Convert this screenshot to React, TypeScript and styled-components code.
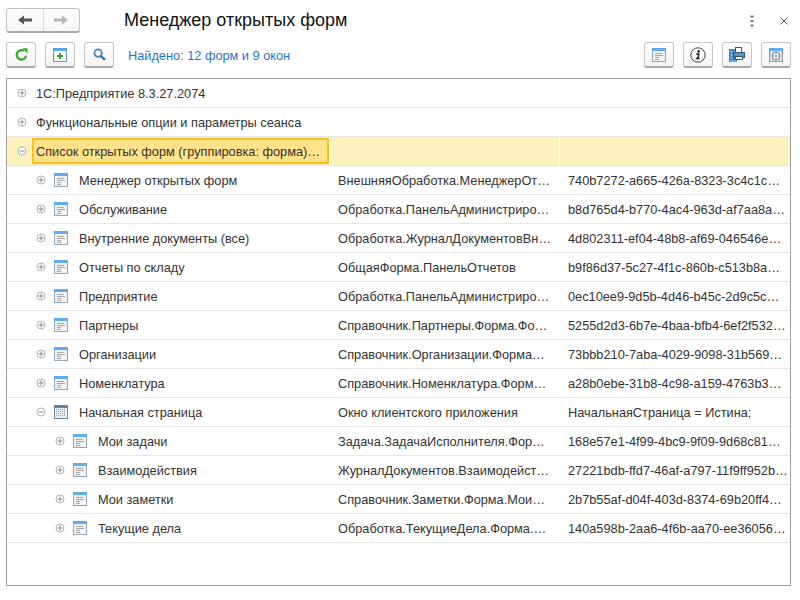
import React, { ReactElement, ReactNode } from 'react';
import styled, { createGlobalStyle } from 'styled-components';

const GlobalStyle = createGlobalStyle`
  html, body {
    margin: 0;
    padding: 0;
    background: #fff;
  }
  body {
    font-family: "Liberation Sans", Arial, sans-serif;
    font-size: 12.75px;
    color: #333;
  }
`;

const Page = styled.div`
  width: 800px;
  height: 600px;
  box-sizing: border-box;
  padding: 8px 8px 0 6px;
  display: flex;
  flex-direction: column;
`;

const Header = styled.div`
  display: flex;
  align-items: center;
  height: 25px;
`;

const NavGroup = styled.div`
  display: flex;
  width: 74px;
  height: 25px;
  box-sizing: border-box;
  border: 1px solid #c4c4c4;
  border-bottom: 2px solid #a8a8a8;
  border-radius: 3px;
  background: linear-gradient(#fff, #f5f5f5);
`;

const NavPart = styled.div<{ $divided?: boolean }>`
  flex: 1;
  display: flex;
  align-items: center;
  justify-content: center;
  border-left: ${(p) => (p.$divided ? '1px solid #d8d8d8' : 'none')};
`;

const Title = styled.div`
  margin-left: 44px;
  font-size: 18px;
  line-height: 25px;
  color: #111;
  flex: 1;
`;

const WindowActions = styled.div`
  display: flex;
  align-items: center;
  gap: 26px;
  padding-right: 4px;
`;

const Toolbar = styled.div`
  display: flex;
  align-items: center;
  height: 26px;
  margin-top: 9px;
  gap: 9px;
`;

const ToolButton = styled.div`
  width: 30px;
  height: 26px;
  box-sizing: border-box;
  display: flex;
  align-items: center;
  justify-content: center;
  border: 1px solid #c6c6c6;
  border-bottom: 2px solid #a8a8a8;
  border-radius: 3px;
  background: linear-gradient(#fff, #f4f4f4);
`;

const Found = styled.div`
  margin-left: 5px;
  color: #1f74d4;
  flex: 1;
`;

const RightTools = styled.div`
  display: flex;
  gap: 9px;
  padding-right: 1px;
`;

const TableBox = styled.div`
  margin-top: 10px;
  width: 785px;
  height: 508px;
  box-sizing: border-box;
  border: 1px solid #a3a3a3;
`;

const Row = styled.div<{ $selected?: boolean }>`
  display: grid;
  grid-template-columns: 322px 230px 1fr;
  height: 29px;
  box-sizing: border-box;
  border-bottom: 1px solid #e6e6e6;
  background: ${(p) => (p.$selected ? '#fdf1c0' : '#fff')};
  color: #333;
`;

const NameCell = styled.div<{ $level: number; $span?: boolean }>`
  display: flex;
  align-items: center;
  padding-left: ${(p) => 10 + p.$level * 19}px;
  white-space: nowrap;
  overflow: hidden;
  grid-column: ${(p) => (p.$span ? '1 / -1' : 'auto')};
`;

const ActiveCell = styled.div`
  display: flex;
  align-items: center;
  padding-left: 10px;
`;

const CurrentName = styled.div`
  margin-left: 5px;
  flex: 1;
  height: 26px;
  box-sizing: border-box;
  display: flex;
  align-items: center;
  padding-left: 2px;
  background: #ffe28a;
  border: 2px solid #f7c21f;
  color: #333;
  white-space: nowrap;
`;

const BlankCell = styled.div`
  border-left: 1px solid #fff;
`;

const TextCell = styled.div`
  display: flex;
  align-items: center;
  padding-left: 9px;
  white-space: nowrap;
  overflow: hidden;
`;

const RowIcon = styled.span`
  display: inline-flex;
  margin-left: 8px;
  margin-right: 11px;
`;

const Label = styled.span<{ $plain?: boolean }>`
  margin-left: ${(p) => (p.$plain ? '9px' : '0')};
`;

const Toggle = ({ open }: { open?: boolean }): ReactElement => (
  <svg width="10" height="10" viewBox="0 0 10 10" style={{ flex: 'none' }}>
    <circle cx="5" cy="5" r="4" fill="#fff" stroke="#b2b2b2" />
    <path d="M2.5 5h5" stroke="#8a8a8a" />
    {!open && <path d="M5 2.5v5" stroke="#8a8a8a" />}
  </svg>
);

const FormIcon = (): ReactElement => (
  <svg width="14" height="14" viewBox="0 0 14 14">
    <rect x="0.5" y="0.5" width="13" height="13" fill="#eff1f3" stroke="#93a8b9" />
    <rect x="0" y="0" width="14" height="3" fill="#62abec" />
    <path d="M3 5.5h7M3 7.5h8M3 9.5h4M3 11.5h4" stroke="#a8a8a8" />
    <rect x="8" y="9" width="4" height="3" fill="#fafafa" />
  </svg>
);

const CalendarIcon = (): ReactElement => (
  <svg width="14" height="14" viewBox="0 0 14 14">
    <rect x="0.5" y="0.5" width="13" height="13" fill="#eaf1f7" stroke="#6b8ba3" />
    <rect x="0" y="0" width="14" height="3" fill="#5d84a3" />
    <path d="M2.5 4v8M4.5 4v8M6.5 4v8M8.5 4v8M10.5 4v8" stroke="#7f99ae" strokeDasharray="1 1" />
  </svg>
);

const BackArrow = ({ color, flip }: { color: string; flip?: boolean }): ReactElement => (
  <svg width="14" height="10" viewBox="0 0 14 10" style={flip ? { transform: 'scaleX(-1)' } : undefined}>
    <path d="M0 5l6-4.5v3h8v3H6v3z" fill={color} />
  </svg>
);

const RefreshIcon = (): ReactElement => (
  <svg width="13" height="13" viewBox="0 0 14 14" fill="none">
    <path d="M12 8.2A5.1 5.1 0 1 1 9.6 3" stroke="#3aa52f" strokeWidth="2.4" />
    <path d="M8 0.4h5.4v5.4z" fill="#3aa52f" />
  </svg>
);

const AddFormIcon = (): ReactElement => (
  <svg width="14" height="14" viewBox="0 0 14 14">
    <rect x="0.5" y="0.5" width="13" height="13" fill="#f7f9fa" stroke="#6f93a8" />
    <rect x="0" y="0" width="14" height="3" fill="#58a6ea" />
    <path d="M7 5v6M4 8h6" stroke="#35a52c" strokeWidth="2" />
  </svg>
);

const SearchIcon = (): ReactElement => (
  <svg width="13" height="13" viewBox="0 0 14 14" fill="none">
    <circle cx="5.5" cy="5.5" r="4" stroke="#4a87b3" strokeWidth="2" />
    <path d="M8.6 8.6l4.2 4.2" stroke="#2f6a96" strokeWidth="2.4" />
  </svg>
);

const InfoIcon = (): ReactElement => (
  <svg width="16" height="16" viewBox="0 0 16 16" fill="none">
    <circle cx="8" cy="8" r="7.2" stroke="#444" />
    <circle cx="8.6" cy="4.4" r="1.3" fill="#222" />
    <path d="M6.2 7h2.6l-.9 4.4h1.4M5.8 11.4h4" stroke="#222" strokeWidth="1.5" />
  </svg>
);

const PrintIcon = (): ReactElement => (
  <svg width="16" height="15" viewBox="0 0 16 15">
    <rect x="0" y="2" width="8" height="13" fill="#3f83c8" />
    <path d="M1 5h5M1 8h3M1 11h3M1 14h6" stroke="#a9cdf0" />
    <rect x="6.5" y="0.5" width="6" height="5" fill="#fff" stroke="#2f5674" />
    <rect x="4.5" y="5.5" width="11" height="5" fill="#5f8fb5" stroke="#2f5674" />
    <rect x="6.5" y="9.5" width="7" height="3" fill="#fff" stroke="#2f5674" />
  </svg>
);

const SnapshotIcon = (): ReactElement => (
  <svg width="14" height="14" viewBox="0 0 14 14" fill="none">
    <rect x="0.5" y="0.5" width="13" height="13" fill="#d9dde1" stroke="#8d9aa6" />
    <rect x="0" y="0" width="14" height="3" fill="#62abec" />
    <circle cx="7" cy="8" r="3.6" fill="#eef0f1" stroke="#8e979e" strokeWidth="1.4" />
    <circle cx="7" cy="8" r="1.3" fill="#8e979e" />
  </svg>
);

const MoreIcon = (): ReactElement => (
  <svg width="4" height="12" viewBox="0 0 4 12">
    <path d="M0.5 0.5h3v2h-3zM0.5 5h3v2h-3zM0.5 9.5h3v2h-3z" fill="#777" />
  </svg>
);

const CloseIcon = (): ReactElement => (
  <svg width="8" height="8" viewBox="0 0 8 8">
    <path d="M0.5 0.5l7 7M7.5 0.5l-7 7" stroke="#555" />
  </svg>
);

interface FormRow {
  level: number;
  name: string;
  form: string;
  id: string;
  open?: boolean;
  icon?: ReactNode;
}

const formRows: FormRow[] = [
  { level: 1, name: 'Менеджер открытых форм', form: 'ВнешняяОбработка.МенеджерОт…', id: '740b7272-a665-426a-8323-3c4c1c…' },
  { level: 1, name: 'Обслуживание', form: 'Обработка.ПанельАдминистриро…', id: 'b8d765d4-b770-4ac4-963d-af7aa8a…' },
  { level: 1, name: 'Внутренние документы (все)', form: 'Обработка.ЖурналДокументовВн…', id: '4d802311-ef04-48b8-af69-046546e…' },
  { level: 1, name: 'Отчеты по складу', form: 'ОбщаяФорма.ПанельОтчетов', id: 'b9f86d37-5c27-4f1c-860b-c513b8a…' },
  { level: 1, name: 'Предприятие', form: 'Обработка.ПанельАдминистриро…', id: '0ec10ee9-9d5b-4d46-b45c-2d9c5c…' },
  { level: 1, name: 'Партнеры', form: 'Справочник.Партнеры.Форма.Фо…', id: '5255d2d3-6b7e-4baa-bfb4-6ef2f532…' },
  { level: 1, name: 'Организации', form: 'Справочник.Организации.Форма…', id: '73bbb210-7aba-4029-9098-31b569…' },
  { level: 1, name: 'Номенклатура', form: 'Справочник.Номенклатура.Форм…', id: 'a28b0ebe-31b8-4c98-a159-4763b3…' },
  { level: 1, name: 'Начальная страница', form: 'Окно клиентского приложения', id: 'НачальнаяСтраница = Истина;', open: true, icon: <CalendarIcon /> },
  { level: 2, name: 'Мои задачи', form: 'Задача.ЗадачаИсполнителя.Фор…', id: '168e57e1-4f99-4bc9-9f09-9d68c81…' },
  { level: 2, name: 'Взаимодействия', form: 'ЖурналДокументов.Взаимодейст…', id: '27221bdb-ffd7-46af-a797-11f9ff952b…' },
  { level: 2, name: 'Мои заметки', form: 'Справочник.Заметки.Форма.Мои…', id: '2b7b55af-d04f-403d-8374-69b20ff4…' },
  { level: 2, name: 'Текущие дела', form: 'Обработка.ТекущиеДела.Форма.…', id: '140a598b-2aa6-4f6b-aa70-ee36056…' },
];

const App = (): ReactElement => (
  <>
    <GlobalStyle />
    <Page>
      <Header>
        <NavGroup>
          <NavPart><BackArrow color="#555" /></NavPart>
          <NavPart $divided><BackArrow color="#b5b5b5" flip /></NavPart>
        </NavGroup>
        <Title>Менеджер открытых форм</Title>
        <WindowActions>
          <MoreIcon />
          <CloseIcon />
        </WindowActions>
      </Header>
      <Toolbar>
        <ToolButton><RefreshIcon /></ToolButton>
        <ToolButton><AddFormIcon /></ToolButton>
        <ToolButton><SearchIcon /></ToolButton>
        <Found>Найдено: 12 форм и 9 окон</Found>
        <RightTools>
          <ToolButton><FormIcon /></ToolButton>
          <ToolButton><InfoIcon /></ToolButton>
          <ToolButton><PrintIcon /></ToolButton>
          <ToolButton><SnapshotIcon /></ToolButton>
        </RightTools>
      </Toolbar>
      <TableBox>
        <Row>
          <NameCell $level={0} $span><Toggle /><Label $plain>1С:Предприятие 8.3.27.2074</Label></NameCell>
        </Row>
        <Row>
          <NameCell $level={0} $span><Toggle /><Label $plain>Функциональные опции и параметры сеанса</Label></NameCell>
        </Row>
        <Row $selected>
          <ActiveCell>
            <Toggle open />
            <CurrentName>Список открытых форм (группировка: форма)…</CurrentName>
          </ActiveCell>
          <BlankCell />
          <BlankCell />
        </Row>
        {formRows.map((row) => (
          <Row key={row.name}>
            <NameCell $level={row.level}>
              <Toggle open={row.open} />
              <RowIcon>{row.icon ?? <FormIcon />}</RowIcon>
              <Label>{row.name}</Label>
            </NameCell>
            <TextCell>{row.form}</TextCell>
            <TextCell>{row.id}</TextCell>
          </Row>
        ))}
      </TableBox>
    </Page>
  </>
);

export default App;
